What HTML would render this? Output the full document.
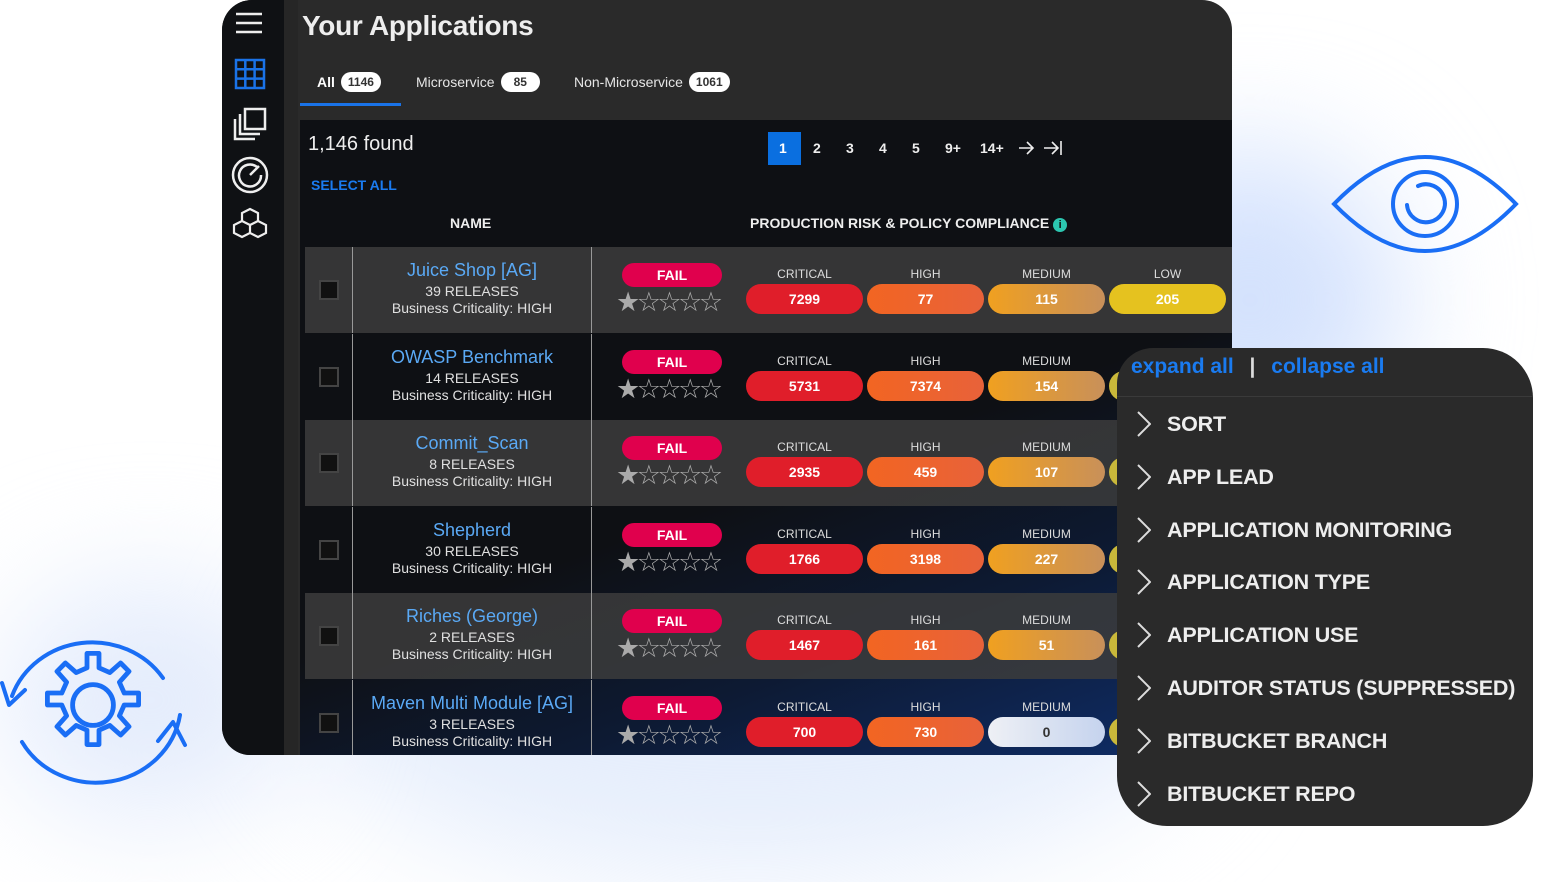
<!DOCTYPE html>
<html><head><meta charset="utf-8"><style>
*{margin:0;padding:0;box-sizing:border-box}
body{width:1568px;height:882px;overflow:hidden;position:relative;font-family:"Liberation Sans",sans-serif;background:#fff}
.glow{position:absolute;border-radius:50%;filter:blur(60px)}
.main{position:absolute;left:222px;top:0;width:1010px;height:755px;background:#2a2a2a;border-radius:30px 30px 0 28px;overflow:hidden}
.side{position:absolute;left:0;top:0;width:62px;height:755px;background:#0f1114}
.side2{position:absolute;left:62px;top:0;width:14px;height:755px;background:#262626}
.title{position:absolute;left:80px;top:10px;color:#eee;font-size:28px;font-weight:bold;letter-spacing:-0.3px}
.tab{position:absolute;top:72px;color:#e6e6e6;font-size:14px;display:flex;align-items:center;gap:6px}
.badge{background:#fff;color:#333;border-radius:10px;font-size:12px;font-weight:bold;padding:3px 7px}
.tbl{position:absolute;left:78px;top:120px;width:932px;height:635px;background:linear-gradient(160deg,#0e1014 55%,#0d1a33 75%,#0f2e6b 100%)}
.row{position:absolute;left:5px;width:927px;height:86px}
.row.g{background:rgba(60,60,60,.85)}
.cb{position:absolute;left:14px;top:33px;width:20px;height:20px;border:2px solid #444;background:#111}
.vl{position:absolute;top:0;width:1px;height:100%;background:#999}
.nm{position:absolute;left:48px;width:238px;text-align:center;top:15px;color:#e0e0e0;font-size:14px;line-height:17px}
.nm b{display:block;color:#5aa9f5;font-size:18px;font-weight:normal;margin-bottom:4px}
.fail{position:absolute;left:317px;top:16px;width:100px;height:24px;border-radius:12px;background:#e0004d;color:#fff;font-weight:bold;font-size:14px;text-align:center;line-height:24px}
.stars{position:absolute;left:311px;top:41px;color:#aaa;font-size:27px;letter-spacing:-3.5px;line-height:28px}
.lab{position:absolute;top:20px;width:117px;text-align:center;color:#ddd;font-size:12px}
.pill{position:absolute;top:37px;width:117px;height:30px;border-radius:15px;color:#fff;font-weight:bold;font-size:14px;text-align:center;line-height:30px}
.filt{position:absolute;left:1117px;top:348px;width:416px;height:478px;background:#2a2a2a;border-radius:36px 50px 50px 50px;overflow:hidden}
.fi{position:absolute;left:50px;color:#eee;font-size:21.5px;font-weight:bold;letter-spacing:-0.2px}
.chev{position:absolute;left:20px;width:14px;height:26px}
</style></head><body>
<div class="glow" style="left:300px;top:500px;width:900px;height:380px;background:#e6eefc"></div>
<div class="glow" style="left:1100px;top:150px;width:300px;height:300px;background:#d4e2fd"></div>
<div class="glow" style="left:0;top:580px;width:300px;height:240px;background:#e4ecfc"></div>

<svg style="position:absolute;left:1330px;top:150px" width="190" height="110" viewBox="0 0 190 110" fill="none" stroke="#1a6ef5" stroke-width="4" stroke-linecap="round">
<path d="M4 54 Q95 -40 186 54 Q95 148 4 54 Z"/><circle cx="95" cy="54" r="32"/><path d="M88 36 A19 19 0 1 1 77 55"/></svg>
<svg style="position:absolute;left:0;top:618px" width="190" height="175" viewBox="0 0 190 175" fill="none" stroke="#1a6ef5" stroke-width="4" stroke-linecap="round" stroke-linejoin="round">
<path d="M163 60 A85 80 0 0 0 12 78"/><path d="M2 65 L9 87 L25 72"/>
<path d="M22 124 A85 80 0 0 0 180 97"/><path d="M158 123 L173 104 L185 127"/>
<g transform="translate(93 87) scale(1.2) translate(-93 -87)">
<circle cx="93" cy="87" r="17"/>
<path d="M88 44 h10 v12 l9 4 9-8 7 7-8 9 4 9 h12 v10 h-12 l-4 9 8 9-7 7-9-8-9 4 v12 h-10 v-12 l-9-4-9 8-7-7 8-9-4-9 h-12 v-10 h12 l4-9-8-9 7-7 9 8 9-4 z"/></g></svg>

<div class="main">
<div class="side"></div><div class="side2"></div>
<svg style="position:absolute;left:12px;top:12px" width="30" height="24" stroke="#eee" stroke-width="2.5"><path d="M2 2h26M2 11h26M2 20h26"/></svg>
<svg style="position:absolute;left:12px;top:58px" width="32" height="32" fill="none" stroke="#1a73e8" stroke-width="2.5"><rect x="2" y="2" width="28" height="28"/><path d="M11.3 2v28M20.6 2v28M2 11.3h28M2 20.6h28"/></svg>
<svg style="position:absolute;left:11px;top:107px" width="34" height="34" fill="none" stroke="#eee" stroke-width="2.5"><rect x="12" y="2" width="20" height="20"/><path d="M7 7v20h20M2 12v20h20"/></svg>
<svg style="position:absolute;left:9px;top:156px" width="38" height="38" fill="none" stroke="#eee" stroke-width="2.5"><circle cx="19" cy="19" r="17"/><path d="M26 11 A11 11 0 1 0 30 19"/><path d="M19 19 L28 10"/></svg>
<svg style="position:absolute;left:10px;top:207px" width="36" height="36" fill="none" stroke="#eee" stroke-width="2.2"><path d="M18 2l8 4v8l-8 4-8-4V6z M10 14l8 4v8l-8 4-8-4v-8z M26 14l8 4v8l-8 4-8-4v-8z"/></svg>

<div class="title">Your Applications</div>
<div class="tab" style="left:95px"><b style="color:#fff">All</b><span class="badge">1146</span></div>
<div style="position:absolute;left:78px;top:103px;width:101px;height:3px;background:#1a73e8"></div>
<div class="tab" style="left:194px">Microservice<span class="badge" style="padding:3px 13px">85</span></div>
<div class="tab" style="left:352px">Non-Microservice<span class="badge">1061</span></div>

<div class="tbl">
<div style="position:absolute;left:8px;top:13px;color:#eee;font-size:20px">1,146 found</div>
<div style="position:absolute;left:11px;top:57px;color:#1a7bf0;font-size:14px;font-weight:bold">SELECT ALL</div>
<div style="position:absolute;left:468px;top:12px;width:33px;height:33px;background:#0a6fe0"></div>
<div style="position:absolute;left:479px;top:20px;color:#fff;font-weight:bold;font-size:14px">1</div>
<div style="position:absolute;left:513px;top:20px;color:#eee;font-weight:bold;font-size:14px;display:flex">
<span style="width:33px">2</span><span style="width:33px">3</span><span style="width:33px">4</span><span style="width:33px">5</span><span style="width:35px">9+</span><span style="width:42px">14+</span></div>
<svg style="position:absolute;left:718px;top:20px" width="50" height="16" fill="none" stroke="#eee" stroke-width="1.6"><path d="M1 8h14M9 2l6 6-6 6M26 8h14M34 2l6 6-6 6M43 1v14"/></svg>
<div style="position:absolute;left:150px;top:95px;color:#eee;font-size:14px;font-weight:bold">NAME</div>
<div style="position:absolute;left:450px;top:95px;color:#eee;font-size:14px;font-weight:bold">PRODUCTION RISK &amp; POLICY COMPLIANCE <span style="display:inline-block;width:14px;height:14px;border-radius:7px;background:#2cc6b0;color:#111;font-size:11px;text-align:center;line-height:14px">i</span></div>
</div>

<div id="rows"></div>
</div>

<div class="filt">
<div style="position:absolute;left:14px;top:7px;color:#1a7bf0;font-size:21px;font-weight:bold">expand all <span style="color:#ddd;margin:0 10px">|</span> collapse all</div>
<div style="position:absolute;left:0;top:48px;width:100%;height:1px;background:#3a3a3a"></div>
</div>

<script>
var rows=[["Juice Shop [AG]","39 RELEASES",7299,77,115,205],["OWASP Benchmark","14 RELEASES",5731,7374,154,""],["Commit_Scan","8 RELEASES",2935,459,107,""],["Shepherd","30 RELEASES",1766,3198,227,""],["Riches (George)","2 RELEASES",1467,161,51,""],["Maven Multi Module [AG]","3 RELEASES",700,730,0,""]];
var h="";
rows.forEach(function(r,i){
var top=247+i*86.5,g=i%2==0;
h+='<div class="row'+(g?' g':'')+'" style="left:83px;top:'+top+'px">';
h+='<div class="cb"></div><div class="vl" style="left:47px"></div><div class="vl" style="left:286px"></div>';
h+='<div class="nm"><b>'+r[0]+'</b>'+r[1]+'<br>Business Criticality: HIGH</div>';
h+='<div class="fail">FAIL</div><div class="stars">★☆☆☆☆</div>';
var labs=["CRITICAL","HIGH","MEDIUM","LOW"],bg=["#e01e2a","linear-gradient(90deg,#f26522,#e8623a)","linear-gradient(90deg,#f0a020,#c8905a)","#e5c21f"];
var xs=[441,562,683,804];
for(var k=0;k<4;k++){var v=r[2+k];
var b=bg[k],c="#fff";if(k==2&&v===0){b="linear-gradient(90deg,#eef0f5,#c5d3ee)";c="#333"}
if(k==3&&v==="")b="#c9b83a";
h+='<div class="lab" style="left:'+xs[k]+'px">'+labs[k]+'</div><div class="pill" style="left:'+xs[k]+'px;background:'+b+';color:'+c+'">'+v+'</div>';}
h+='</div>';});
document.getElementById("rows").innerHTML=h;
var it=["SORT","APP LEAD","APPLICATION MONITORING","APPLICATION TYPE","APPLICATION USE","AUDITOR STATUS (SUPPRESSED)","BITBUCKET BRANCH","BITBUCKET REPO"],f="";
it.forEach(function(t,i){var y=63+i*52.8;
f+='<svg class="chev" style="top:'+y+'px" viewBox="0 0 14 26" fill="none" stroke="#ddd" stroke-width="2"><path d="M1 1l12 12L1 25"/></svg><div class="fi" style="top:'+(y+1)+'px">'+t+'</div>';});
document.querySelector(".filt").insertAdjacentHTML("beforeend",f);
</script>
</body></html>
